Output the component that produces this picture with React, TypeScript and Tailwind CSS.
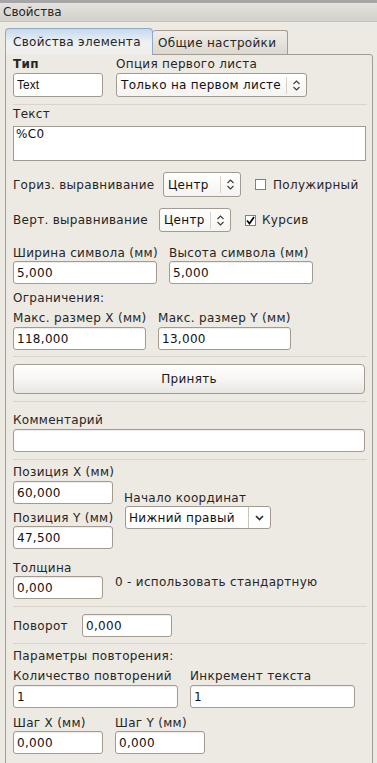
import React from "react";

const font = { fontFamily: '"DejaVu Sans", "Liberation Sans", sans-serif' };

function UpDown() {
  return (
    <svg width="7" height="11" viewBox="0 0 7 11" className="block">
      <path d="M0.5 4 L3.5 1 L6.5 4" fill="none" stroke="#3a3a3a" strokeWidth="1.1" />
      <path d="M0.5 7 L3.5 10 L6.5 7" fill="none" stroke="#3a3a3a" strokeWidth="1.1" />
    </svg>
  );
}

function Down() {
  return (
    <svg width="9" height="6" viewBox="0 0 9 6" className="block">
      <path d="M1 1 L4.5 4.5 L8 1" fill="none" stroke="#2a2a2a" strokeWidth="1.6" />
    </svg>
  );
}

function Field({ value, w, h = "h-[23px]", cls = "" }: { value: string; w: string; h?: string; cls?: string }) {
  return (
    <div
      className={`${w} ${h} ${cls} bg-white border border-[#a39b90] rounded-[3px] flex items-center pl-[3px] text-[12px] text-[#111] shadow-[inset_0_1px_1px_rgba(0,0,0,0.08)]`}
    >
      {value}
    </div>
  );
}

function Combo({ value, w, h = "h-[25px]" }: { value: string; w: string; h?: string }) {
  return (
    <div
      className={`${w} ${h} bg-gradient-to-b from-white to-[#f5f4f1] border border-[#a39b90] rounded-[3px] flex items-center text-[12px] text-[#111]`}
    >
      <span className="pl-[4px] flex-1 whitespace-nowrap overflow-hidden">{value}</span>
      <span className="h-[17px] border-l border-[#d6d1c9] flex items-center px-[6px]">
        <UpDown />
      </span>
    </div>
  );
}

function Check({ on }: { on?: boolean }) {
  return (
    <span className="w-[11px] h-[11px] bg-white border border-[#857e75] flex items-center justify-center">
      {on && (
        <svg width="9" height="9" viewBox="0 0 9 9">
          <path d="M1 4.5 L3.5 7.5 L8 1" fill="none" stroke="#000" strokeWidth="1.7" />
        </svg>
      )}
    </span>
  );
}

function Sep({ mt }: { mt: string }) {
  return <div className={`${mt} h-px bg-[#d9d3c9] mr-[5px]`} />;
}

function Label({ children, mt = "", cls = "" }: { children: React.ReactNode; mt?: string; cls?: string }) {
  return <div className={`${mt} ${cls} h-[15px] leading-[15px] text-[12px] whitespace-nowrap`}>{children}</div>;
}

export default function App() {
  return (
    <div className="w-[377px] h-[763px] overflow-hidden bg-[#edeae4] text-[#262626] tracking-[0.3px]" style={font}>
      {/* Title */}
      <div className="h-[22px] border-t-[3px] border-[#a6a6a6] bg-gradient-to-b from-[#e4e2de] to-[#d3d1cc] border-b border-b-[#c4c1bb] pl-[3px] text-[12px] leading-[19px] tracking-normal">
        Свойства
      </div>

      {/* Tabs */}
      <div className="pl-[5px] pt-[5px] flex items-end h-[32px]">
        <div className="relative z-10 h-[27px] w-[148px] rounded-t-[4px] border border-[#8fa9c6] border-b-0 bg-gradient-to-b from-[#c4d8ee] via-[#eef1f3] to-[#f0eeea] flex items-center pl-[7px] text-[12px] -mb-px">
          Свойства элемента
        </div>
        <div className="h-[24px] w-[135px] rounded-t-[3px] border border-[#a39c91] border-l-0 border-b-0 bg-gradient-to-b from-[#f0ede8] to-[#dcd8d0] flex items-center pl-[5px] text-[12px]">
          Общие настройки
        </div>
      </div>

      {/* Pane */}
      <div className="ml-[5px] w-[368px] h-[720px] border border-[#a39c91] rounded-tr-[3px] pl-[7px] pt-[2px] flex flex-col">
        <div className="flex gap-[13px]">
          <div className="w-[90px] shrink-0">
            <Label cls="font-bold">Тип</Label>
            <div className="mt-[1px] w-[90px] h-[24px] bg-white border border-[#a39b90] rounded-[3px] flex items-center pl-[3px] text-[12px] text-[#111] tracking-normal" style={{ fontFamily: '"Liberation Sans", Arial, sans-serif' }}>
              Text
            </div>
          </div>
          <div>
            <Label>Опция первого листа</Label>
            <div className="mt-[1px]">
              <Combo value="Только на первом листе" w="w-[191px]" h="h-[24px]" />
            </div>
          </div>
        </div>

        <Sep mt="mt-[7px]" />
        <Label mt="mt-[2px]">Текст</Label>
        <div className="mt-[4px] mr-[6px] h-[35px] bg-white border border-[#a39b90] pl-[2px] text-[12px] leading-[15px] text-[#111]">
          %C0
        </div>

        <div className="mt-[11px] flex items-center h-[25px]">
          <span className="text-[12px] w-[150px] shrink-0 whitespace-nowrap">Гориз. выравнивание</span>
          <Combo value="Центр" w="w-[78px]" />
          <span className="ml-[14px] flex items-center gap-[7px] text-[12px]">
            <Check />
            Полужирный
          </span>
        </div>

        <div className="mt-[11px] flex items-center h-[24px]">
          <span className="text-[12px] w-[146px] shrink-0 whitespace-nowrap">Верт. выравнивание</span>
          <Combo value="Центр" w="w-[72px]" h="h-[24px]" />
          <span className="ml-[14px] flex items-center gap-[6px] text-[12px]">
            <Check on />
            Курсив
          </span>
        </div>

        <div className="mt-[14px] flex gap-[12px]">
          <div className="w-[144px] shrink-0">
            <Label>Ширина символа (мм)</Label>
            <Field value="5,000" w="w-[144px]" />
          </div>
          <div>
            <Label>Высота символа (мм)</Label>
            <Field value="5,000" w="w-[144px]" />
          </div>
        </div>

        <Label mt="mt-[7px]">Ограничения:</Label>
        <div className="mt-[5px] flex gap-[12px]">
          <div className="w-[133px] shrink-0">
            <Label>Макс. размер X (мм)</Label>
            <Field value="118,000" w="w-[133px]" cls="mt-[1px]" />
          </div>
          <div>
            <Label>Макс. размер Y (мм)</Label>
            <Field value="13,000" w="w-[133px]" cls="mt-[1px]" />
          </div>
        </div>

        <Sep mt="mt-[6px]" />
        <button className="mt-[7px] mr-[7px] h-[30px] rounded-[4px] border border-[#a39b90] bg-gradient-to-b from-white via-[#f7f6f4] to-[#e9e7e3] text-[12px] font-normal text-[#1a1a1a]">
          Принять
        </button>
        <Sep mt="mt-[7px]" />

        <Label mt="mt-[11px]">Комментарий</Label>
        <Field value="" w="mr-[7px]" cls="mt-[1px]" />
        <Sep mt="mt-[7px]" />

        <div className="flex gap-[11px]">
          <div className="w-[100px] shrink-0">
            <Label mt="mt-[5px]">Позиция X (мм)</Label>
            <Field value="60,000" w="w-[100px]" cls="mt-[1px]" />
            <Label mt="mt-[7px]">Позиция Y (мм)</Label>
            <Field value="47,500" w="w-[100px]" />
          </div>
          <div className="mt-[31px]">
            <Label>Начало координат</Label>
            <div className="ml-[1px] w-[146px] h-[23px] bg-white border border-[#a39b90] rounded-[3px] flex items-center text-[12px] text-[#111]">
              <span className="pl-[3px] flex-1">Нижний правый</span>
              <span className="h-full border-l border-[#c9c3ba] flex items-center px-[6px]">
                <Down />
              </span>
            </div>
          </div>
        </div>

        <Label mt="mt-[12px]">Толщина</Label>
        <div className="flex items-start gap-[12px]">
          <Field value="0,000" w="w-[90px] shrink-0" />
          <Label mt="-mt-[1px]">0 - использовать стандартную</Label>
        </div>
        <Sep mt="mt-[7px]" />

        <div className="mt-[7px] flex items-center">
          <span className="text-[12px] w-[69px] shrink-0">Поворот</span>
          <Field value="0,000" w="w-[90px]" h="h-[23px]" />
        </div>
        <Sep mt="mt-[6px]" />

        <Label mt="mt-[5px]">Параметры повторения:</Label>
        <div className="mt-[5px] flex gap-[12px]">
          <div className="w-[165px] shrink-0">
            <Label>Количество повторений</Label>
            <Field value="1" w="w-[165px]" cls="mt-[1px]" />
          </div>
          <div>
            <Label>Инкремент текста</Label>
            <Field value="1" w="w-[165px]" cls="mt-[1px]" />
          </div>
        </div>
        <div className="mt-[8px] flex gap-[12px]">
          <div className="w-[90px] shrink-0">
            <Label>Шаг X (мм)</Label>
            <Field value="0,000" w="w-[90px]" />
          </div>
          <div>
            <Label>Шаг Y (мм)</Label>
            <Field value="0,000" w="w-[90px]" />
          </div>
        </div>
      </div>
    </div>
  );
}
